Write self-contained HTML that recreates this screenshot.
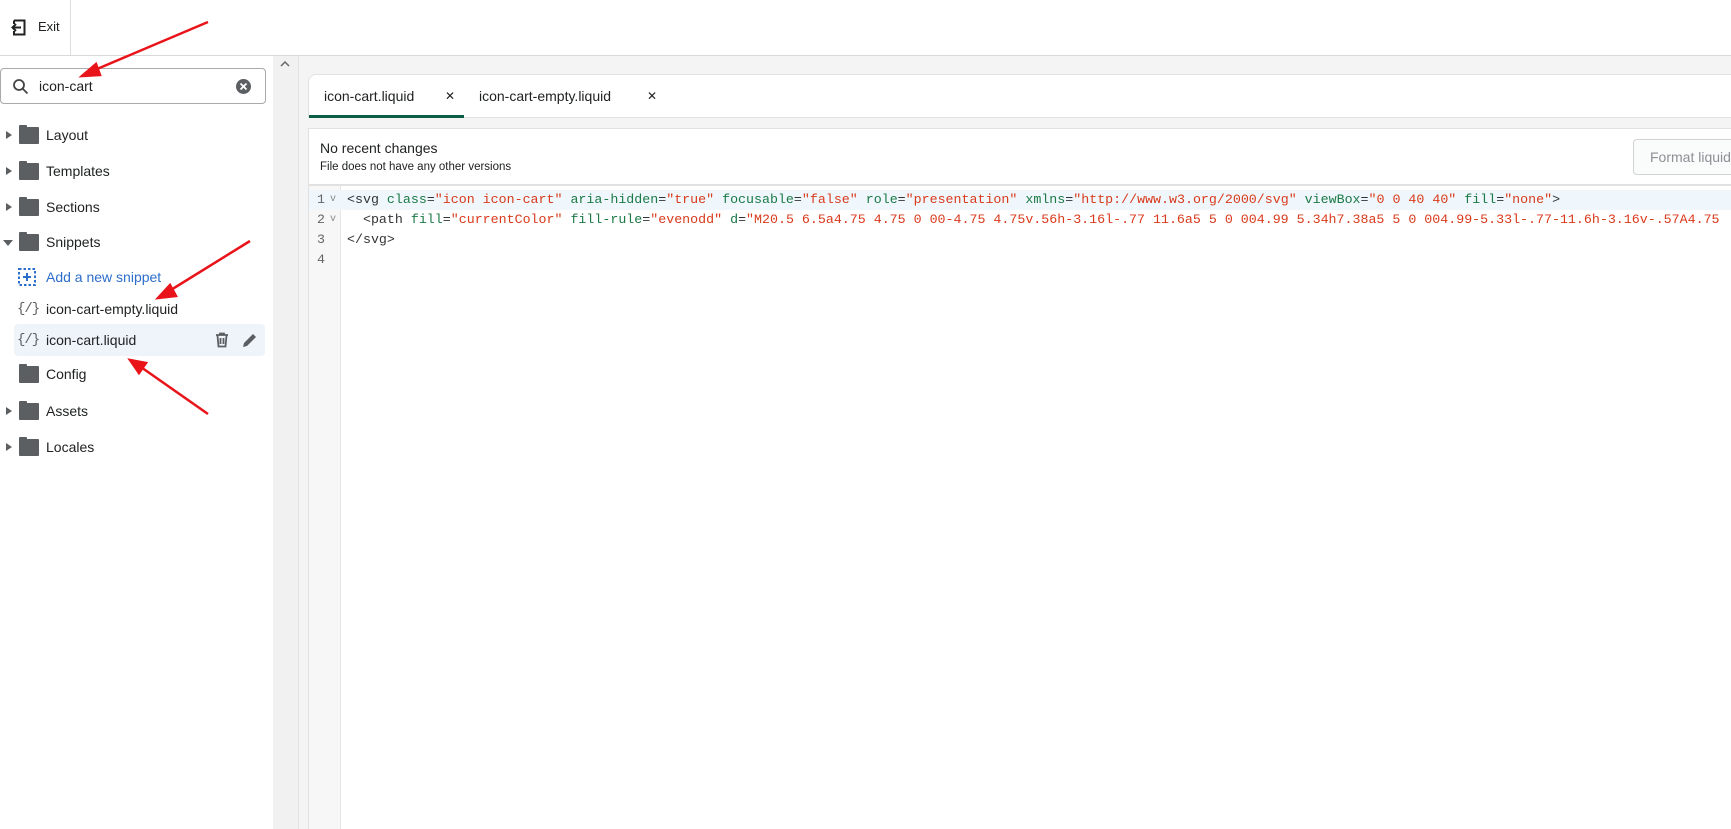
<!DOCTYPE html>
<html><head><meta charset="utf-8"><style>
*{box-sizing:border-box;margin:0;padding:0}
body{width:1731px;height:829px;overflow:hidden;background:#fff;font-family:"Liberation Sans",sans-serif;color:#202223;position:relative}
.hdr{position:absolute;left:0;top:0;width:1731px;height:56px;border-bottom:1px solid #d9d9d9;background:#fff}
.hdr .div{position:absolute;left:70px;top:0;width:1px;height:55px;background:#ddd}
.side{position:absolute;left:0;top:56px;width:273px;height:773px;background:#fff}
.strip{position:absolute;left:273px;top:56px;width:26px;height:773px;background:#f1f1f1;border-right:1px solid #e3e3e3}
.main{position:absolute;left:299px;top:56px;width:1432px;height:773px;background:#f4f4f4}
.search{position:absolute;left:0;top:68px;width:266px;height:36px;border:1px solid #aaa;border-radius:4px;background:#fff}
.search span{position:absolute;left:38px;top:9px;font-size:14px}
.item{position:absolute;left:0;height:32px;width:266px;font-size:14px;line-height:32px}
.item .t{position:absolute;left:46px}
.tri{position:absolute;left:6px;top:12px;width:0;height:0;border-top:4.5px solid transparent;border-bottom:4.5px solid transparent;border-left:6px solid #5c5f62}
.trid{position:absolute;left:3px;top:14px;width:0;height:0;border-left:5px solid transparent;border-right:5px solid transparent;border-top:6px solid #5c5f62}
.fold{position:absolute;left:19px;top:8px;width:20px;height:17px;background:#5c5f62;border-radius:1px}
.fold:before{content:"";position:absolute;left:0;top:-2px;width:8px;height:3px;background:#5c5f62;border-radius:1px 1px 0 0}
.br{position:absolute;left:17px;font-size:14px;color:#5c5f62;font-family:"Liberation Mono",monospace;letter-spacing:-1px}
.card{position:absolute;left:308px;top:74px;width:1423px;height:44px;background:#fff;border:1px solid #e1e1e1;border-right:none;border-radius:8px 0 0 0}
.tab{position:absolute;top:0;height:43px;font-size:14px;line-height:42px}
.info{position:absolute;left:308px;top:128px;width:1423px;height:57px;background:#fff;border:1px solid #e1e1e1;border-right:none;overflow:hidden}
.code{position:absolute;left:308px;top:185px;width:1423px;height:644px;background:#fff;border-left:1px solid #e1e1e1;border-top:1px solid #e1e1e1;overflow:hidden}
.gut{position:absolute;left:0;top:0;width:32px;height:644px;background:#f7f7f7;border-right:1px solid #e6e6e6}
.ln{position:absolute;left:0;width:1422px;height:20px;font-family:"Liberation Mono",monospace;font-size:13.3px;line-height:20px;white-space:pre;overflow:hidden}
.ln .n{position:absolute;left:8px;color:#666}
.ln .v{position:absolute;left:21px;font-size:10px;color:#888}
.ln .c{position:absolute;left:38px;color:#333}
.a{color:#1b7a46}.s{color:#d93a1c}
</style></head><body>
<div class="hdr">
<svg style="position:absolute;left:10px;top:19px" width="17" height="17" viewBox="0 0 17 17"><path d="M4 1.5h10.5v14H4v-3.5M4 5V1.5" fill="none" stroke="#202223" stroke-width="2"/><path d="M11 8.5H2.5M6 5l-3.5 3.5L6 12" fill="none" stroke="#202223" stroke-width="2"/></svg>
<span style="position:absolute;left:38px;top:19px;font-size:13px">Exit</span>
<div class="div"></div>
</div>
<div class="side">
<div class="search" style="top:12px">
<svg style="position:absolute;left:11px;top:9px" width="17" height="17" viewBox="0 0 17 17"><circle cx="7" cy="7" r="5" fill="none" stroke="#444" stroke-width="1.8"/><path d="M10.5 10.5l5 5" stroke="#444" stroke-width="1.8"/></svg>
<span>icon-cart</span>
<svg style="position:absolute;left:234px;top:9px" width="17" height="17" viewBox="0 0 17 17"><circle cx="8.5" cy="8.5" r="7.5" fill="#5c5f62"/><path d="M5.5 5.5l6 6M11.5 5.5l-6 6" stroke="#fff" stroke-width="1.8"/></svg>
</div>
</div>
<div class="item" style="top:119px"><div class="tri"></div><div class="fold"></div><span class="t">Layout</span></div>
<div class="item" style="top:155px"><div class="tri"></div><div class="fold"></div><span class="t">Templates</span></div>
<div class="item" style="top:191px"><div class="tri"></div><div class="fold"></div><span class="t">Sections</span></div>
<div class="item" style="top:226px"><div class="trid"></div><div class="fold"></div><span class="t">Snippets</span></div>
<div class="item" style="top:261px"><svg style="position:absolute;left:18px;top:7px" width="18" height="18" viewBox="0 0 18 18"><rect x="1" y="1" width="16" height="16" fill="none" stroke="#2c6ecb" stroke-width="2" stroke-dasharray="2.5 2"/><path d="M9 5v8M5 9h8" stroke="#2c6ecb" stroke-width="2"/></svg><span class="t" style="color:#2c6ecb">Add a new snippet</span></div>
<div class="item" style="top:293px"><span class="br">{/}</span><span class="t">icon-cart-empty.liquid</span></div>
<div style="position:absolute;left:14px;top:324px;width:251px;height:32px;background:#eff4fb;border-radius:4px"></div>
<div class="item" style="top:324px"><span class="br">{/}</span><span class="t">icon-cart.liquid</span>
<svg style="position:absolute;left:214px;top:8px" width="16" height="16" viewBox="0 0 16 16"><path d="M2 3h12M6 3V1.5h4V3M3.5 3.5l1 11h7l1-11M6.5 6v6M9.5 6v6" fill="none" stroke="#5c5f62" stroke-width="1.8"/></svg>
<svg style="position:absolute;left:242px;top:8px" width="16" height="16" viewBox="0 0 16 16"><path d="M1 15l1-4 9-9 3 3-9 9z" fill="#5c5f62"/></svg></div>
<div class="item" style="top:358px"><div class="fold"></div><span class="t">Config</span></div>
<div class="item" style="top:395px"><div class="tri"></div><div class="fold"></div><span class="t">Assets</span></div>
<div class="item" style="top:431px"><div class="tri"></div><div class="fold"></div><span class="t">Locales</span></div>
<div class="strip"><svg style="position:absolute;left:7px;top:4px" width="10" height="8" viewBox="0 0 10 8"><path d="M1 6l4-4 4 4" fill="none" stroke="#666" stroke-width="1.5"/></svg></div>
<div class="main"></div>
<div class="card">
<div class="tab" style="left:0;width:155px;border-bottom:3px solid #0b5e46"><span style="position:absolute;left:15px">icon-cart.liquid</span><span style="position:absolute;left:136px;font-size:12px">✕</span></div>
<div class="tab" style="left:170px"><span style="position:absolute;left:0;white-space:nowrap">icon-cart-empty.liquid</span><span style="position:absolute;left:168px;font-size:12px">✕</span></div>
</div>
<div class="info">
<div style="position:absolute;left:11px;top:11px;font-size:14px">No recent changes</div>
<div style="position:absolute;left:11px;top:32px;font-size:11.5px">File does not have any other versions</div>
<div style="position:absolute;left:1324px;top:10px;width:110px;height:36px;border:1px solid #d2d2d2;border-radius:4px;background:#fafbfb;font-size:14px;color:#8c9196;line-height:34px;padding-left:16px;white-space:nowrap">Format liquid</div>
</div>
<div class="code">
<div class="gut"></div>
<div class="ln" style="top:4px;background:#eff7fc"><span class="n">1</span><span class="v">v</span><span class="c">&lt;svg <span class="a">class</span>=<span class="s">"icon icon-cart"</span> <span class="a">aria-hidden</span>=<span class="s">"true"</span> <span class="a">focusable</span>=<span class="s">"false"</span> <span class="a">role</span>=<span class="s">"presentation"</span> <span class="a">xmlns</span>=<span class="s">"http://www.w3.org/2000/svg"</span> <span class="a">viewBox</span>=<span class="s">"0 0 40 40"</span> <span class="a">fill</span>=<span class="s">"none"</span>&gt;</span></div>
<div class="ln" style="top:24px"><span class="n">2</span><span class="v">v</span><span class="c">  &lt;path <span class="a">fill</span>=<span class="s">"currentColor"</span> <span class="a">fill-rule</span>=<span class="s">"evenodd"</span> <span class="a">d</span>=<span class="s">"M20.5 6.5a4.75 4.75 0 00-4.75 4.75v.56h-3.16l-.77 11.6a5 5 0 004.99 5.34h7.38a5 5 0 004.99-5.33l-.77-11.6h-3.16v-.57A4.75</span></span></div>
<div class="ln" style="top:44px"><span class="n">3</span><span class="c">&lt;/svg&gt;</span></div>
<div class="ln" style="top:64px"><span class="n">4</span></div>
</div>
<svg style="position:absolute;left:0;top:0" width="1731" height="829">
<g stroke="#e8141a" stroke-width="2.5" fill="#e8141a">
<line x1="208" y1="22" x2="90" y2="72"/><polygon points="82,76 96,64 100,75" />
<line x1="250" y1="241" x2="166" y2="293"/><polygon points="158,298 170,285 176,296"/>
<line x1="208" y1="414" x2="138" y2="365"/><polygon points="130,360 146,363 139,373"/>
</g></svg>
</body></html>
